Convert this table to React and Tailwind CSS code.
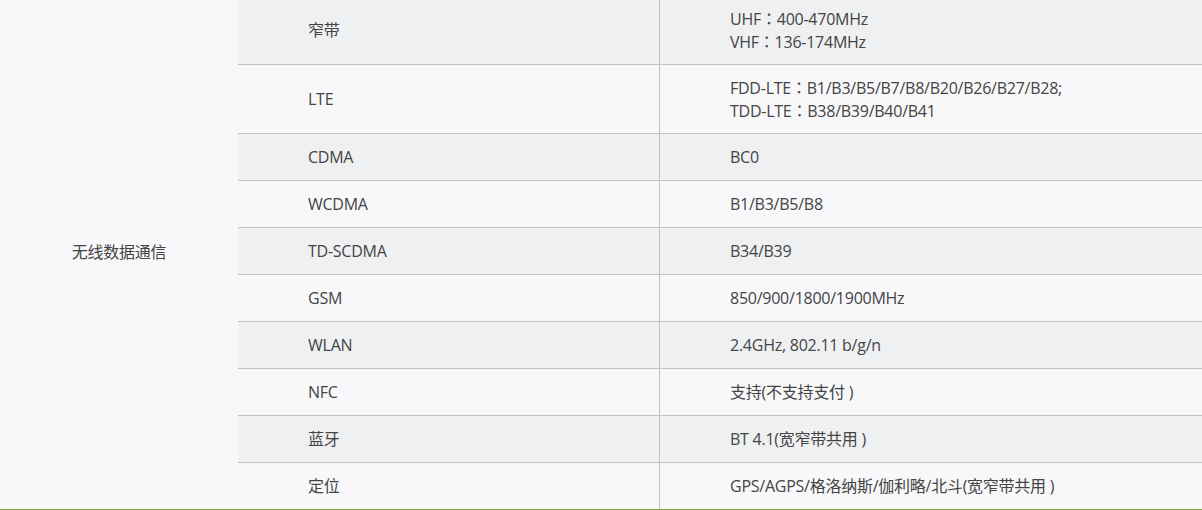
const rows = [
  { name: "窄带", value: [["UHF", "400-470MHz"], ["VHF", "136-174MHz"]], shade: true, h: "h-[65px]", pad: "pb-[4px]" },
  { name: "LTE", value: [["FDD-LTE", "B1/B3/B5/B7/B8/B20/B26/B27/B28;"], ["TDD-LTE", "B38/B39/B40/B41"]], shade: false, h: "h-[69px]", pad: "" },
  { name: "CDMA", value: ["BC0"], shade: true, h: "h-[47px]", pad: "" },
  { name: "WCDMA", value: ["B1/B3/B5/B8"], shade: false, h: "h-[47px]", pad: "" },
  { name: "TD-SCDMA", value: ["B34/B39"], shade: true, h: "h-[47px]", pad: "" },
  { name: "GSM", value: ["850/900/1800/1900MHz"], shade: false, h: "h-[47px]", pad: "" },
  { name: "WLAN", value: ["2.4GHz, 802.11 b/g/n"], shade: true, h: "h-[47px]", pad: "" },
  { name: "NFC", value: ["支持(不支持支付 )"], shade: false, h: "h-[47px]", pad: "" },
  { name: "蓝牙", value: ["BT 4.1(宽窄带共用 )"], shade: true, h: "h-[47px]", pad: "" },
  { name: "定位", value: ["GPS/AGPS/格洛纳斯/伽利略/北斗(宽窄带共用 )"], shade: false, h: "h-[46px]", pad: "" },
];

// full-width colon drawn centred, as in the original page font
const Colon = () => <span style={{ fontFamily: '"Noto Sans CJK TC", sans-serif' }}>：</span>;

export default function App() {
  return (
    <div
      className="w-[1202px] h-[510px] overflow-hidden bg-[#f8f8fa] text-[#444] text-[16px] leading-[22px] tracking-[-0.25px]"
      style={{ fontFamily: '"Open Sans", "Noto Sans CJK SC", sans-serif' }}
    >
      <div className="flex border-b border-[#8ca53c]">
        {/* group label */}
        <div className="w-[238px] shrink-0 flex items-center justify-center pb-[5px]">无线数据通信</div>

        {/* spec rows */}
        <div className="flex-1 flex flex-col">
          {rows.map((row, i) => (
            <div
              key={row.name}
              className={`flex ${row.h} ${i < rows.length - 1 ? "border-b border-[#c2c2c2]" : ""} ${
                row.shade ? "bg-[#eff0f2]" : "bg-[#f8f8fa]"
              }`}
            >
              <div className={`w-[422px] shrink-0 border-r border-[#c2c2c2] pl-[70px] flex items-center ${row.pad}`}>
                {row.name}
              </div>
              <div className={`flex-1 pl-[70px] flex flex-col justify-center ${row.pad}`}>
                {row.value.map((line) =>
                  Array.isArray(line) ? (
                    <div key={line[0]}>
                      {line[0]}
                      <Colon />
                      {line[1]}
                    </div>
                  ) : (
                    <div key={line}>{line}</div>
                  )
                )}
              </div>
            </div>
          ))}
        </div>
      </div>
    </div>
  );
}
